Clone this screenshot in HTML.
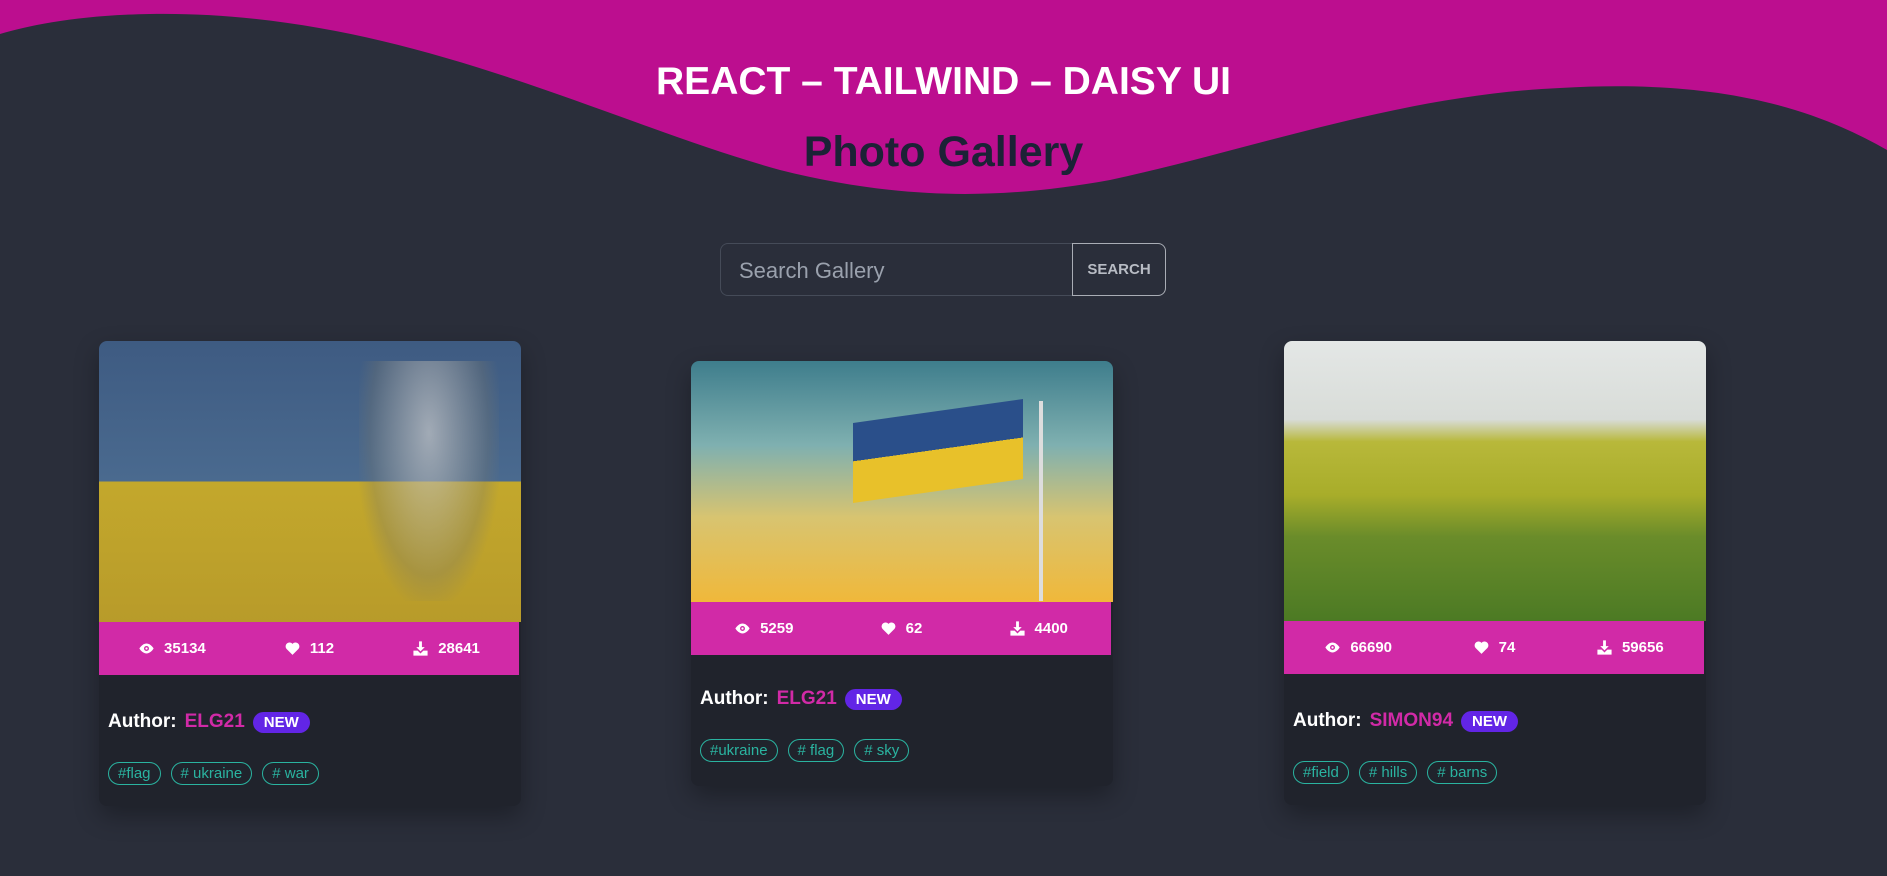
<!DOCTYPE html>
<html><head><meta charset="utf-8"><style>
*{box-sizing:border-box;margin:0;padding:0}
body{width:1887px;height:876px;background:#2a2e3a;font-family:"Liberation Sans",sans-serif;position:relative;overflow:hidden}
svg.wave{position:absolute;left:0;top:0}
.t1{position:absolute;top:60px;left:0;width:1887px;text-align:center;color:#fff;font-weight:bold;font-size:39px}
.t2{position:absolute;top:128px;left:0;width:1887px;text-align:center;color:#1c2236;font-weight:bold;font-size:43px}
.search{position:absolute;left:720px;top:243px;width:446px;height:53px;display:flex}
.search .in{width:352px;height:53px;border:1px solid #454b58;border-right:none;border-radius:8px 0 0 8px;background:#2a2e3a;color:#9aa1ad;font-size:22px;padding:14px 18px}
.search .bt{width:94px;height:53px;border:1px solid #a9adb5;border-radius:0 8px 8px 0;color:#b8bcc4;font-size:15px;font-weight:bold;text-align:center;line-height:51px}
.card{position:absolute;width:422px;background:#20232c;border-radius:8px;overflow:hidden;box-shadow:0 10px 25px rgba(0,0,0,.3)}
.img{width:422px}
.stats{height:53px;background:#d12aa7;display:flex;justify-content:space-around;align-items:center;color:#fff;font-weight:bold;font-size:15px;width:420px}
.stats span{display:flex;align-items:center;gap:9px}
.author{color:#fff;font-weight:bold;font-size:19px;padding:0 9px;display:flex;align-items:center;gap:8px}
.author .n{color:#d12aa7}
.badge{background:#6225e6;color:#fff;font-size:15px;border-radius:12px;padding:2px 11px}
.tags{padding:0 9px;display:flex;gap:10px}
.tags span{border:1px solid #2ab3a0;color:#2ab3a0;border-radius:12px;font-size:15px;padding:2px 9px}
</style></head><body>
<svg width="0" height="0" style="position:absolute"><defs>
<symbol id="eye" viewBox="0 0 24 24"><path d="M12 5C6 5 2 12 2 12s4 7 10 7 10-7 10-7-4-7-10-7z" fill="#fff"/><circle cx="12" cy="12" r="3.5" fill="#d12aa7"/><circle cx="12" cy="12" r="1.6" fill="#fff"/></symbol>
<symbol id="heart" viewBox="0 0 24 24"><path d="M12 21L3.5 12.5A5 5 0 0 1 12 5.5a5 5 0 0 1 8.5 7z" fill="#fff"/></symbol>
<symbol id="dl" viewBox="0 0 24 24"><path d="M10 2h4v8h4l-6 6-6-6h4z M2 15h6l4 4 4-4h6v7H2z" fill="#fff"/></symbol>
</defs></svg>
<svg class="wave" width="1887" height="240" viewBox="0 0 1887 240">
<rect width="1887" height="240" fill="#2a2e3a"/>
<path d="M0 0 H1887 V150 C1800 100 1700 80 1560 88 C1400 95 1250 150 1110 180 C1000 200 900 200 780 170 C600 120 400 10 150 14 C80 15 30 25 0 34 Z" fill="#bc0e8f"/>
</svg>
<div class="t1">REACT – TAILWIND – DAISY UI</div>
<div class="t2">Photo Gallery</div>
<div class="search"><div class="in">Search Gallery</div><div class="bt">SEARCH</div></div>

<div class="card" style="left:99px;top:341px;height:465px">
<div class="img" style="height:281px;background:linear-gradient(180deg,#3e5b82 0%,#4a6a8f 50%,#c3a82c 50%,#b89b2a 100%);position:relative">
<div style="position:absolute;left:260px;top:20px;width:140px;height:240px;background:radial-gradient(ellipse at 50% 30%,rgba(200,200,200,.7),rgba(120,120,110,.3) 60%,transparent 75%)"></div></div>
<div class="stats"><span><svg width="17" height="17"><use href="#eye"/></svg>35134</span><span><svg width="17" height="17"><use href="#heart"/></svg>112</span><span><svg width="17" height="17"><use href="#dl"/></svg>28641</span></div>
<div class="author" style="margin-top:36px">Author: <span class="n">ELG21</span><span class="badge">NEW</span></div>
<div class="tags" style="margin-top:29px"><span>#flag</span><span># ukraine</span><span># war</span></div>
</div>

<div class="card" style="left:691px;top:361px;height:425px">
<div class="img" style="height:241px;background:linear-gradient(180deg,#3e7d8c 0%,#7fb0b0 35%,#d8c470 65%,#f0b83a 100%);position:relative">
<div style="position:absolute;left:162px;top:50px;width:170px;height:80px;background:linear-gradient(180deg,#2a4f8a 0 48%,#e8c12a 48% 100%);transform:skewY(-8deg)"></div>
<div style="position:absolute;left:348px;top:40px;width:4px;height:200px;background:#ddd"></div></div>
<div class="stats"><span><svg width="17" height="17"><use href="#eye"/></svg>5259</span><span><svg width="17" height="17"><use href="#heart"/></svg>62</span><span><svg width="17" height="17"><use href="#dl"/></svg>4400</span></div>
<div class="author" style="margin-top:33px">Author: <span class="n">ELG21</span><span class="badge">NEW</span></div>
<div class="tags" style="margin-top:29px"><span>#ukraine</span><span># flag</span><span># sky</span></div>
</div>

<div class="card" style="left:1284px;top:341px;height:464px">
<div class="img" style="height:280px;background:linear-gradient(180deg,#e4e7e6 0%,#d8dcd8 28%,#b8b83a 36%,#a8ad2a 55%,#6a8c2a 70%,#4c7a24 100%)"></div>
<div class="stats"><span><svg width="17" height="17"><use href="#eye"/></svg>66690</span><span><svg width="17" height="17"><use href="#heart"/></svg>74</span><span><svg width="17" height="17"><use href="#dl"/></svg>59656</span></div>
<div class="author" style="margin-top:36px">Author: <span class="n">SIMON94</span><span class="badge">NEW</span></div>
<div class="tags" style="margin-top:29px"><span>#field</span><span># hills</span><span># barns</span></div>
</div>
</body></html>
